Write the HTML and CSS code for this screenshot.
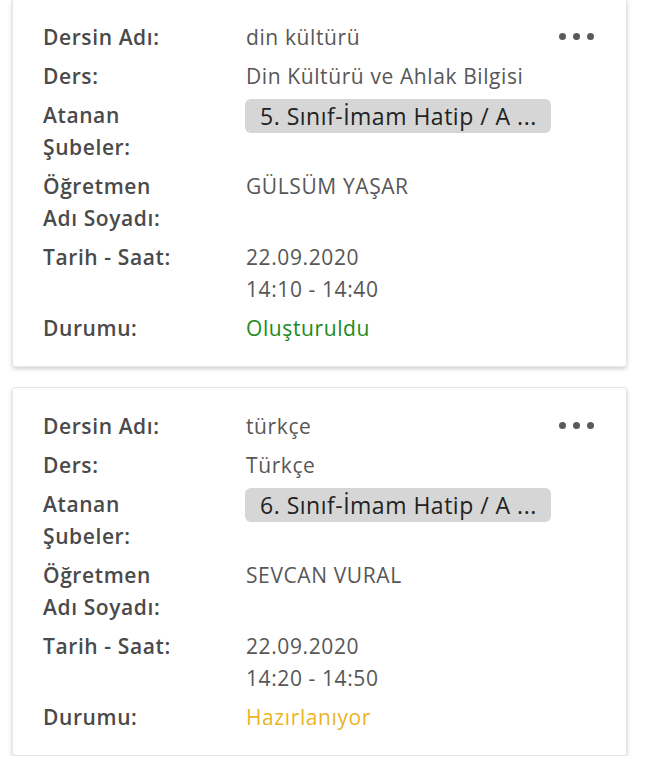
FILE: index.html
```html
<!DOCTYPE html>
<html lang="tr">
<head>
<meta charset="utf-8">
<link rel="stylesheet" href="styles.css">
</head>
<body>
<div class="list">
  <div class="card first">
    <div class="more"><span></span><span></span><span></span></div>
    <div class="row"><div class="label">Dersin Adı:</div><div class="value">din kültürü</div></div>
    <div class="row"><div class="label">Ders:</div><div class="value">Din Kültürü ve Ahlak Bilgisi</div></div>
    <div class="row"><div class="label">Atanan<br>Şubeler:</div><div class="value"><span class="chip">5. Sınıf-İmam Hatip / A ...</span></div></div>
    <div class="row"><div class="label">Öğretmen<br>Adı Soyadı:</div><div class="value">GÜLSÜM YAŞAR</div></div>
    <div class="row"><div class="label">Tarih - Saat:</div><div class="value">22.09.2020<br>14:10 - 14:40</div></div>
    <div class="row"><div class="label">Durumu:</div><div class="value green">Oluşturuldu</div></div>
  </div>
  <div class="card">
    <div class="more"><span></span><span></span><span></span></div>
    <div class="row"><div class="label">Dersin Adı:</div><div class="value">türkçe</div></div>
    <div class="row"><div class="label">Ders:</div><div class="value">Türkçe</div></div>
    <div class="row"><div class="label">Atanan<br>Şubeler:</div><div class="value"><span class="chip">6. Sınıf-İmam Hatip / A ...</span></div></div>
    <div class="row"><div class="label">Öğretmen<br>Adı Soyadı:</div><div class="value">SEVCAN VURAL</div></div>
    <div class="row"><div class="label">Tarih - Saat:</div><div class="value">22.09.2020<br>14:20 - 14:50</div></div>
    <div class="row"><div class="label">Durumu:</div><div class="value yellow">Hazırlanıyor</div></div>
  </div>
</div>
</body>
</html>
```
FILE: styles.css
```css
html, body {
  margin: 0;
  padding: 0;
  background: #fff;
}
body {
  font-family: "Open Sans", "Noto Sans", sans-serif;
  overflow: hidden;
}
.list {
  display: flex;
  flex-direction: column;
  gap: 20px;
  padding: 0 28px 0 12px;
  margin-top: -2px;
}
.card {
  position: relative;
  background: #fff;
  border: 1px solid #e6e6e6;
  border-radius: 3px;
  box-shadow: 0 2px 4px rgba(0,0,0,0.18);
  padding: 22px 20px 22px 30px;
  display: flex;
  flex-direction: column;
  gap: 7px;
}
.row {
  display: flex;
  line-height: 32px;
  font-size: 21px;
  letter-spacing: 0.6px;
}
.label {
  width: 203px;
  flex: none;
  font-weight: 600;
  color: #4a4a4a;
}
.value {
  color: #575757;
}
.chip {
  display: inline-block;
  background: #d6d6d6;
  color: #222;
  font-size: 23px;
  letter-spacing: 0.5px;
  line-height: 34px;
  height: 34px;
  padding: 0 14px 0 15px;
  border-radius: 6px;
  margin-left: -1px;
}
.green { color: #208a20; }
.yellow { color: #ebb425; }
.more {
  position: absolute;
  right: 32px;
  top: 34px;
  display: flex;
  gap: 7px;
}
.more span {
  width: 7px;
  height: 7px;
  border-radius: 50%;
  background: #5a5a5a;
}
```
